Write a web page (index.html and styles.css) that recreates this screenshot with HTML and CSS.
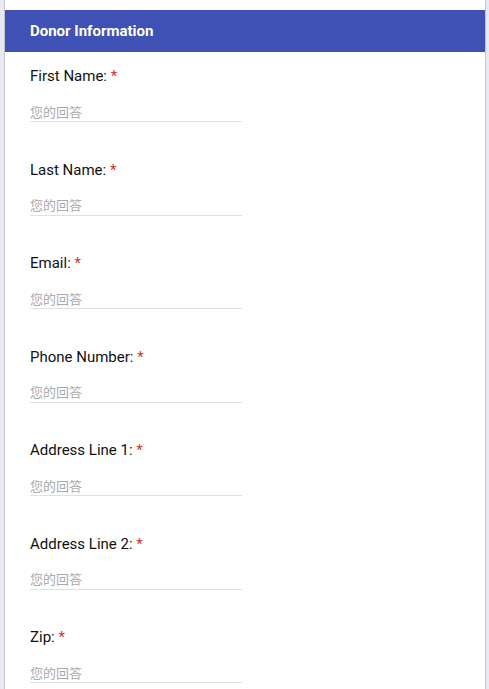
FILE: index.html
```html
<!DOCTYPE html>
<html lang="zh-CN">
<head>
    <meta charset="UTF-8">
    <meta name="viewport" content="width=device-width, initial-scale=1.0">
    <link rel="stylesheet" href="styles.css">
    <title>Donor Information</title>
</head>
<body>
    <div class="form-card">
        <div class="card-top"></div>
        <h3 class="section-heading">Donor Information</h3>
        <form id="form">
            <div class="field">
                <label for="first">First Name: <span class="req">*</span></label>
                <input type="text" id="first" placeholder="您的回答">
            </div>
            <div class="field">
                <label for="last">Last Name: <span class="req">*</span></label>
                <input type="text" id="last" placeholder="您的回答">
            </div>
            <div class="field">
                <label for="email">Email: <span class="req">*</span></label>
                <input type="email" id="email" placeholder="您的回答">
            </div>
            <div class="field">
                <label for="phone">Phone Number: <span class="req">*</span></label>
                <input type="text" id="phone" placeholder="您的回答">
            </div>
            <div class="field">
                <label for="addr1">Address Line 1: <span class="req">*</span></label>
                <input type="text" id="addr1" placeholder="您的回答">
            </div>
            <div class="field">
                <label for="addr2">Address Line 2: <span class="req">*</span></label>
                <input type="text" id="addr2" placeholder="您的回答">
            </div>
            <div class="field">
                <label for="zip">Zip: <span class="req">*</span></label>
                <input type="text" id="zip" placeholder="您的回答">
            </div>
        </form>
    </div>
</body>
</html>
```

FILE: styles.css
```css
*{
    box-sizing: border-box;
}
html{
    font-size: 15px;
}
body{
    margin: 0;
    font-family: "Roboto", "Noto Sans CJK SC", sans-serif;
    background-color: #e8e9f3;
}
.form-card{
    margin: 0 3px 0 4px;
    background-color: #fff;
    border-left: 1px solid #c4c5cc;
    border-right: 1px solid #c4c5cc;
    min-height: 689px;
}
.card-top{
    height: 10px;
}
.section-heading{
    margin: 0;
    height: 42px;
    line-height: 42px;
    padding-left: 25px;
    background-color: #3f51b5;
    color: #fff;
    font-size: 15px;
    font-weight: 700;
}
.field{
    padding: 14px 25px 23.5px;
}
label{
    display: block;
    height: 20px;
    line-height: 20px;
    font-size: 15px;
    color: #111;
}
.req{
    color: #d93025;
}
input{
    display: block;
    width: 212px;
    height: 19px;
    margin-top: 17px;
    padding: 0 0 2px;
    border: none;
    border-bottom: 1px solid #e0e0e0;
    outline: none;
    font-family: "Noto Sans CJK SC", sans-serif;
    font-size: 13px;
    line-height: 16px;
    color: #202124;
    background: transparent;
}
input::placeholder{
    color: #a9a9a9;
}
```
